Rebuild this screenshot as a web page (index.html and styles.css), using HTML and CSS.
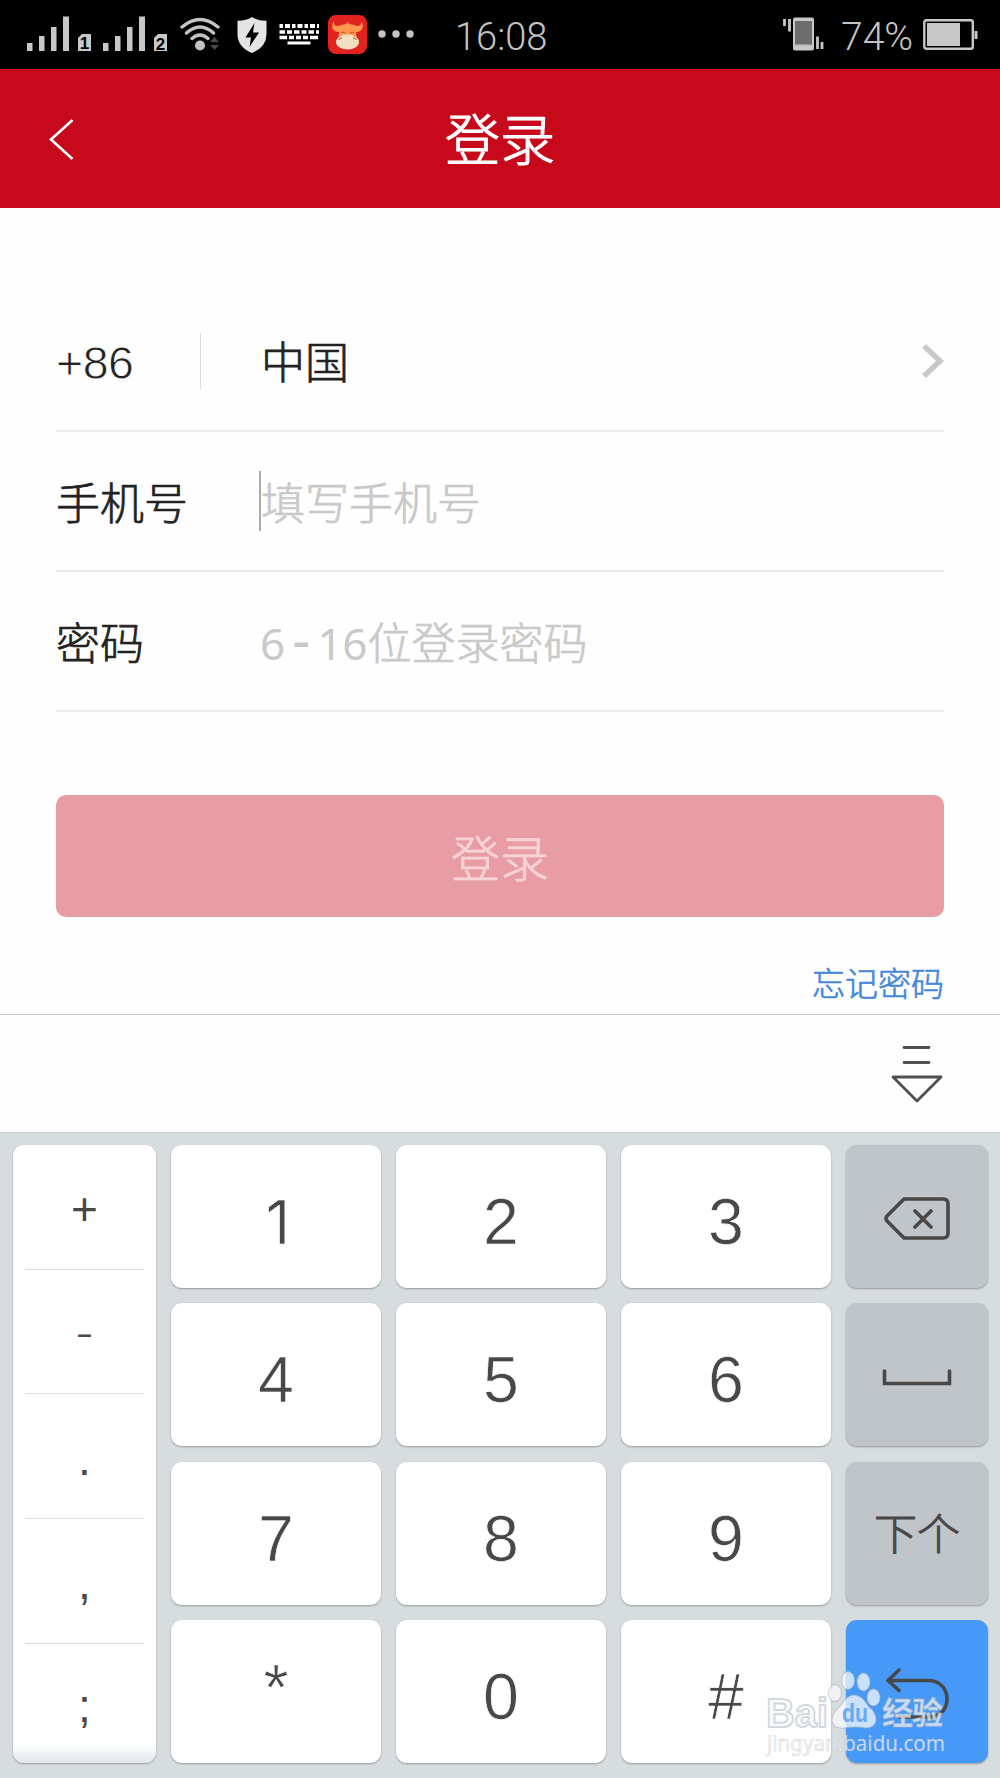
FILE: index.html
```html
<!DOCTYPE html>
<html lang="zh-CN">
<head>
<meta charset="utf-8">
<title>登录</title>
<link rel="stylesheet" href="styles.css">
</head>
<body>
<div class="screen">
  <div class="status">
    <svg class="signal" width="66" height="40" viewBox="0 0 66 40" fill="#c8c8c8">
      <path d="M0 28h5.500v8H0zM12 21h5.500v15H12zM24 12h5.500v24H24zM36 1.500h6v34.500H36zM55 19h9v17H51V23z"/>
      <text class="sim" x="57.500" y="34">1</text>
    </svg>
    <svg class="signal second" width="66" height="40" viewBox="0 0 66 40" fill="#c8c8c8">
      <path d="M0 28h5.500v8H0zM12 21h5.500v15H12zM24 12h5.500v24H24zM36 1.500h6v34.500H36zM55 19h9v17H51V23z"/>
      <text class="sim" x="57.500" y="34.500">2</text>
    </svg>
    <svg class="wifi" width="40" height="40" viewBox="0 0 40 40" fill="none" stroke="#c4c4c4" stroke-width="3.400" stroke-linecap="round">
      <path d="M2 12Q20-3 38 12M6.500 18Q20 6 33.500 18M12 23.500Q20 16.500 28 23.500"/>
      <circle cx="20" cy="30.500" r="5" fill="#c4c4c4" stroke="none"/>
      <path d="M30 27l4.500-5 4.500 5zM30 30l4.500 5 4.500-5z" fill="#4a4a4a" stroke="none"/>
    </svg>
    <svg class="shield" width="30" height="40" viewBox="0 0 30 40">
      <path d="M15 2Q21 6 29.500 5.800V19Q29.500 32 15 38Q.5 32 .5 19V5.800Q9 6 15 2z" fill="#e4e4e4"/>
      <path d="M17.500 8L8.500 22.500H14L12.500 32L22 17.500H16z" fill="#000"/>
    </svg>
    <svg class="keys-icon" width="40" height="40" viewBox="0 0 40 40" stroke="#fff" fill="none">
      <path d="M.5 11H40" stroke-width="4" stroke-dasharray="3.500 2 5 2"/>
      <path d="M.5 17H40" stroke-width="3.500" stroke-dasharray="5.500 2 5 2"/>
      <path d="M.5 22.500H40" stroke-width="3.500" stroke-dasharray="7.500 2 5 2 5 2 5 2 8 2"/>
      <path d="M8.500 28H31.500" stroke-width="3"/>
    </svg>
    <svg class="app-icon" width="39" height="39" viewBox="0 0 39 39">
      <rect width="39" height="39" rx="8" fill="#e2231f"/>
      <path d="M6 6C2 12 5 17 11 17L10 28H29L28 17C34 17 37 12 33 6C34 11 30 12 26 10L21 9L19.500 7L18 9L13 10C9 12 5 11 6 6z" fill="#ff974f"/>
      <ellipse cx="19.500" cy="27" rx="11.500" ry="7.500" fill="#f3dfc1"/>
      <path d="M13 18q2-2 4 0M22 18q2-2 4 0M11 25q0-2 3-2M28 25q0-2-3-2" fill="none" stroke="#9a5a36"/>
    </svg>
    <svg class="dots" width="36" height="10" viewBox="0 0 36 10" fill="#c4c4c4"><circle cx="4" cy="5" r="3.700"/><circle cx="18" cy="5" r="3.700"/><circle cx="32" cy="5" r="3.700"/></svg>
    <div class="clock">16:08</div>
    <svg class="vibrate" width="41" height="40" viewBox="0 0 41 40">
      <path d="M1.500 4v7M6.500 4v12.500M34.500 21.500V34M39 27v7" stroke="#c8c8c8" stroke-width="2.800"/>
      <rect x="10" y="2.500" width="21" height="33" rx="2" fill="#c8c8c8"/><path d="M12 6h17v23H12z" fill="#6d6d6d"/><path d="M12 29h17v1.300H12z" fill="#999"/>
    </svg>
    <div class="percent">74%</div>
    <svg class="battery" width="55" height="32" viewBox="0 0 55 32">
      <rect x="1.300" y="1.300" width="48.500" height="28.500" rx="2" fill="none" stroke="#c8c8c8" stroke-width="2.400"/>
      <path d="M4 4h33v23H4zM51.500 12h3v8h-3z" fill="#c8c8c8"/>
    </svg>
  </div>

  <header class="header">
    <svg class="back" width="26" height="44" viewBox="0 0 26 44"><path d="M23.500 3L2 22.500L23.500 42" fill="none" stroke="#fff" stroke-width="2.600"/></svg>
    <h1 class="title">登录</h1>
  </header>

  <main class="form">
    <div class="row">
      <span class="code">+86</span>
      <span class="separator"></span>
      <span class="country">中国</span>
      <svg class="chevron" width="23" height="36" viewBox="0 0 23 36"><path d="M3 3L19 18L3 33" fill="none" stroke="#c9c9c9" stroke-width="5.500"/></svg>
    </div>
    <div class="row">
      <span class="label">手机号</span>
      <span class="field focused">填写手机号</span>
    </div>
    <div class="row">
      <span class="label">密码</span>
      <span class="field"><span class="range">6<span class="dash">-</span>16</span>位登录密码</span>
    </div>
    <button class="submit">登录</button>
    <a class="forgot">忘记密码</a>
  </main>

  <div class="toolbar">
    <svg width="52" height="58" viewBox="0 0 52 58" fill="none" stroke="#505050" stroke-width="2.800" stroke-linecap="round" stroke-linejoin="round"><path d="M13 2.500H38M13 17.500H38M2 32H50L26 56z"/></svg>
  </div>

  <div class="keyboard">
    <div class="symbols"><span>+</span><span class="minus">-</span><span>.</span><span>,</span><span>;</span></div>
    <div class="key one">1</div><div class="key">2</div><div class="key">3</div>
    <div class="key side"><svg width="66" height="44" viewBox="0 0 66 44" fill="none" stroke="#484848" stroke-width="3.600" stroke-linecap="round" stroke-linejoin="round"><path d="M20 2H59Q64 2 64 7V36Q64 41 59 41H20L3 24Q1 21.500 3 19zM31 14L47 30M47 14L31 30"/></svg></div>
    <div class="key">4</div><div class="key">5</div><div class="key">6</div>
    <div class="key side"><svg class="space" width="70" height="17" viewBox="0 0 70 17" fill="none" stroke="#484848" stroke-width="3.600" stroke-linecap="round"><path d="M2.500 2V14.500H67.500V2"/></svg></div>
    <div class="key">7</div><div class="key">8</div><div class="key">9</div>
    <div class="key side next">下个</div>
    <div class="key star">*</div><div class="key">0</div><div class="key">#</div>
    <div class="key side enter"><svg width="63" height="52" viewBox="0 0 63 52" fill="none" stroke="#484848" stroke-width="3.600" stroke-linecap="round" stroke-linejoin="round"><path d="M13 2L2 12.500L13 22.500M3 12.500H43C67 13 67 49 43 49H13"/></svg></div>
  </div>

  <svg class="watermark" width="188" height="90" viewBox="0 0 188 90">
    <g fill="#f8fafc" fill-opacity=".74" stroke="#a4acb3" stroke-opacity=".45" stroke-width="1.300">
      <text class="brand" x="6" y="59" textLength="62" lengthAdjust="spacingAndGlyphs" stroke-width="2">Bai</text>
      <ellipse cx="75" cy="25" rx="6.500" ry="8.500"/>
      <ellipse cx="88" cy="12.500" rx="6.500" ry="9"/>
      <ellipse cx="103.500" cy="14" rx="6.500" ry="9"/>
      <ellipse cx="113.500" cy="29.500" rx="6.500" ry="8.500"/>
      <path d="M94 27Q102 27 108 38Q117 45 116 53Q114 60 106 60Q94 58 84 60Q73 61 72 52Q72 45 81 37Q87 27 94 27z"/>
      <text class="jingyan" x="122" y="56" textLength="61">经验</text>
      <text class="url" x="7" y="83" textLength="178" lengthAdjust="spacingAndGlyphs" stroke-width=".7">jingyan.baidu.com</text>
    </g>
    <text class="du" x="82" y="54" textLength="26" lengthAdjust="spacingAndGlyphs">du</text>
  </svg>
</div>
</body>
</html>
```

FILE: styles.css
```css
* { box-sizing: border-box; }

body {
  margin: 0;
  background: #fefefe;
  font-family: "Noto Sans CJK SC", sans-serif;
  font-weight: 300;
  color: #222;
}

.screen {
  position: relative;
  width: 1000px;
  height: 1778px;
  display: flex;
  flex-direction: column;
  overflow: hidden;
}

svg { display: block; flex: none; }

/* Light CJK face thickened to a book weight */
.title,
.country,
.label,
.field,
.submit,
.forgot,
.next { -webkit-text-stroke: 0.7px currentColor; }

.status {
  height: 69px;
  flex: none;
  display: flex;
  align-items: flex-start;
  padding: 15px 22px 0 27px;
  background: #000;
}

.sim {
  font: 700 17px "Liberation Sans", sans-serif;
  text-anchor: middle;
  fill: #000;
}

.second { margin-left: 10px; }
.wifi { margin-left: 11px; }
.shield { margin-left: 17px; }
.keys-icon { margin-left: 12px; }
.app-icon { margin-left: 9px; }
.dots { margin: 14px 0 0 11px; }

.clock,
.percent {
  font: 300 38px/44px Roboto, sans-serif;
  color: #c4c4c4;
  white-space: nowrap;
}

.clock { width: 100px; margin-left: 41px; }
.vibrate { margin-left: auto; }
.percent { width: 80px; margin-left: 17px; font-size: 39px; }
.battery { margin: 4px 0 0 2px; }

.header {
  height: 139px;
  flex: none;
  display: grid;
  grid-template-columns: 100px 1fr 100px;
  align-items: center;
  background: #c60a1b;
  color: #fff;
}

.back { margin: 1px 0 0 49px; }

.title {
  margin: 0 0 5px;
  font-size: 55px;
  line-height: 80px;
  font-weight: 300;
  text-align: center;
  -webkit-text-stroke-width: 1.1px;
}

.form {
  height: 806px;
  flex: none;
  display: flex;
  flex-direction: column;
  padding: 84px 56px 0;
}

.row {
  height: 140px;
  flex: none;
  display: flex;
  align-items: center;
  border-bottom: 2px solid #ebebeb;
  font-size: 44px;
  line-height: 60px;
}

.code {
  width: 144px;
  padding-top: 3px;
  font: 400 46.5px/60px "Liberation Sans", sans-serif;
  letter-spacing: -0.5px;
  -webkit-text-stroke: 0.8px #fefefe;
}

.separator { width: 1px; height: 56px; background: #ddd; }
.country { margin: 0 0 3px 60px; flex: 1; }
.label { width: 203px; }
.field { display: flex; align-items: center; height: 60px; color: #c9c9c9; }
.focused { border-left: 2px solid #aaa; }
.range { padding-left: 1px; font-family: "Noto Sans", sans-serif; font-weight: 400; -webkit-text-stroke-width: 0; }
.dash { display: inline-block; width: 32px; text-align: center; font-size: 56px; line-height: 1; }

.submit {
  height: 122px;
  margin-top: 83px;
  padding: 0 0 2px;
  border: 0;
  border-radius: 10px;
  background: #e89da4;
  color: #f6d3d6;
  font: 300 49px "Noto Sans CJK SC", sans-serif;
}

.forgot {
  margin-top: 41px;
  align-self: flex-end;
  font-size: 33px;
  line-height: 48px;
  color: #4788db;
}

.toolbar {
  height: 119px;
  flex: none;
  display: flex;
  justify-content: flex-end;
  align-items: flex-start;
  padding: 30px 57px 0 0;
  border-top: 1px solid #c8cbce;
  border-bottom: 1px solid #c8cccf;
}

.keyboard {
  flex: 1;
  display: grid;
  grid-template-columns: 143px 210px 210px 210px 142px;
  grid-template-rows: repeat(4, 143px);
  gap: 15.4px 15px;
  padding: 12px 12px 15px 13px;
  background: #d7dcdf;
}

.key,
.symbols {
  border-radius: 11px;
  background: #fff;
  box-shadow: 0 1px 2px #0000004d;
  color: #484848;
}

.key {
  display: flex;
  align-items: center;
  justify-content: center;
  padding-top: 11px;
  font: 400 64.5px/1 "Liberation Sans", sans-serif;
  -webkit-text-stroke: 0.7px #fff;
}

.one { padding-left: 4px; font: 400 61px/1 Inter, sans-serif; }
.star { padding: 0 0 6px; }
.side { padding-top: 4px; background: #c0c5c9; }
.space { margin-top: 1px; }
.next { padding: 0 0 4px; font: 300 43px "Noto Sans CJK SC", sans-serif; -webkit-text-stroke: 1px #484848; }
.enter { background: #4799f7; }

.symbols {
  grid-row: span 4;
  display: grid;
  grid-template-rows: repeat(4, 124.7px) 1fr;
  padding: 0 12px;
  background: linear-gradient(#fff 97%, #e0e6ec);
}

.symbols span {
  display: flex;
  align-items: center;
  justify-content: center;
  padding-top: 5px;
  border-bottom: 1px solid #dedede;
  font: 400 46px/1 "Liberation Sans", sans-serif;
}

.symbols .minus { font: 300 42px/1 Inter, sans-serif; }
.symbols span:last-child { border-bottom: 0; }

/* Site mark overlapping the lower right keys */
.watermark { position: absolute; left: 760px; top: 1668px; }
.brand { font: 700 41px/1 "Liberation Sans", sans-serif; }
.jingyan { font: 700 31px/1 "Noto Sans CJK SC", sans-serif; }
.url { font: 400 21px/1 "Noto Sans", sans-serif; }
.du { font: 700 25px/1 "Liberation Sans", sans-serif; fill: #69a9f1; }
```
